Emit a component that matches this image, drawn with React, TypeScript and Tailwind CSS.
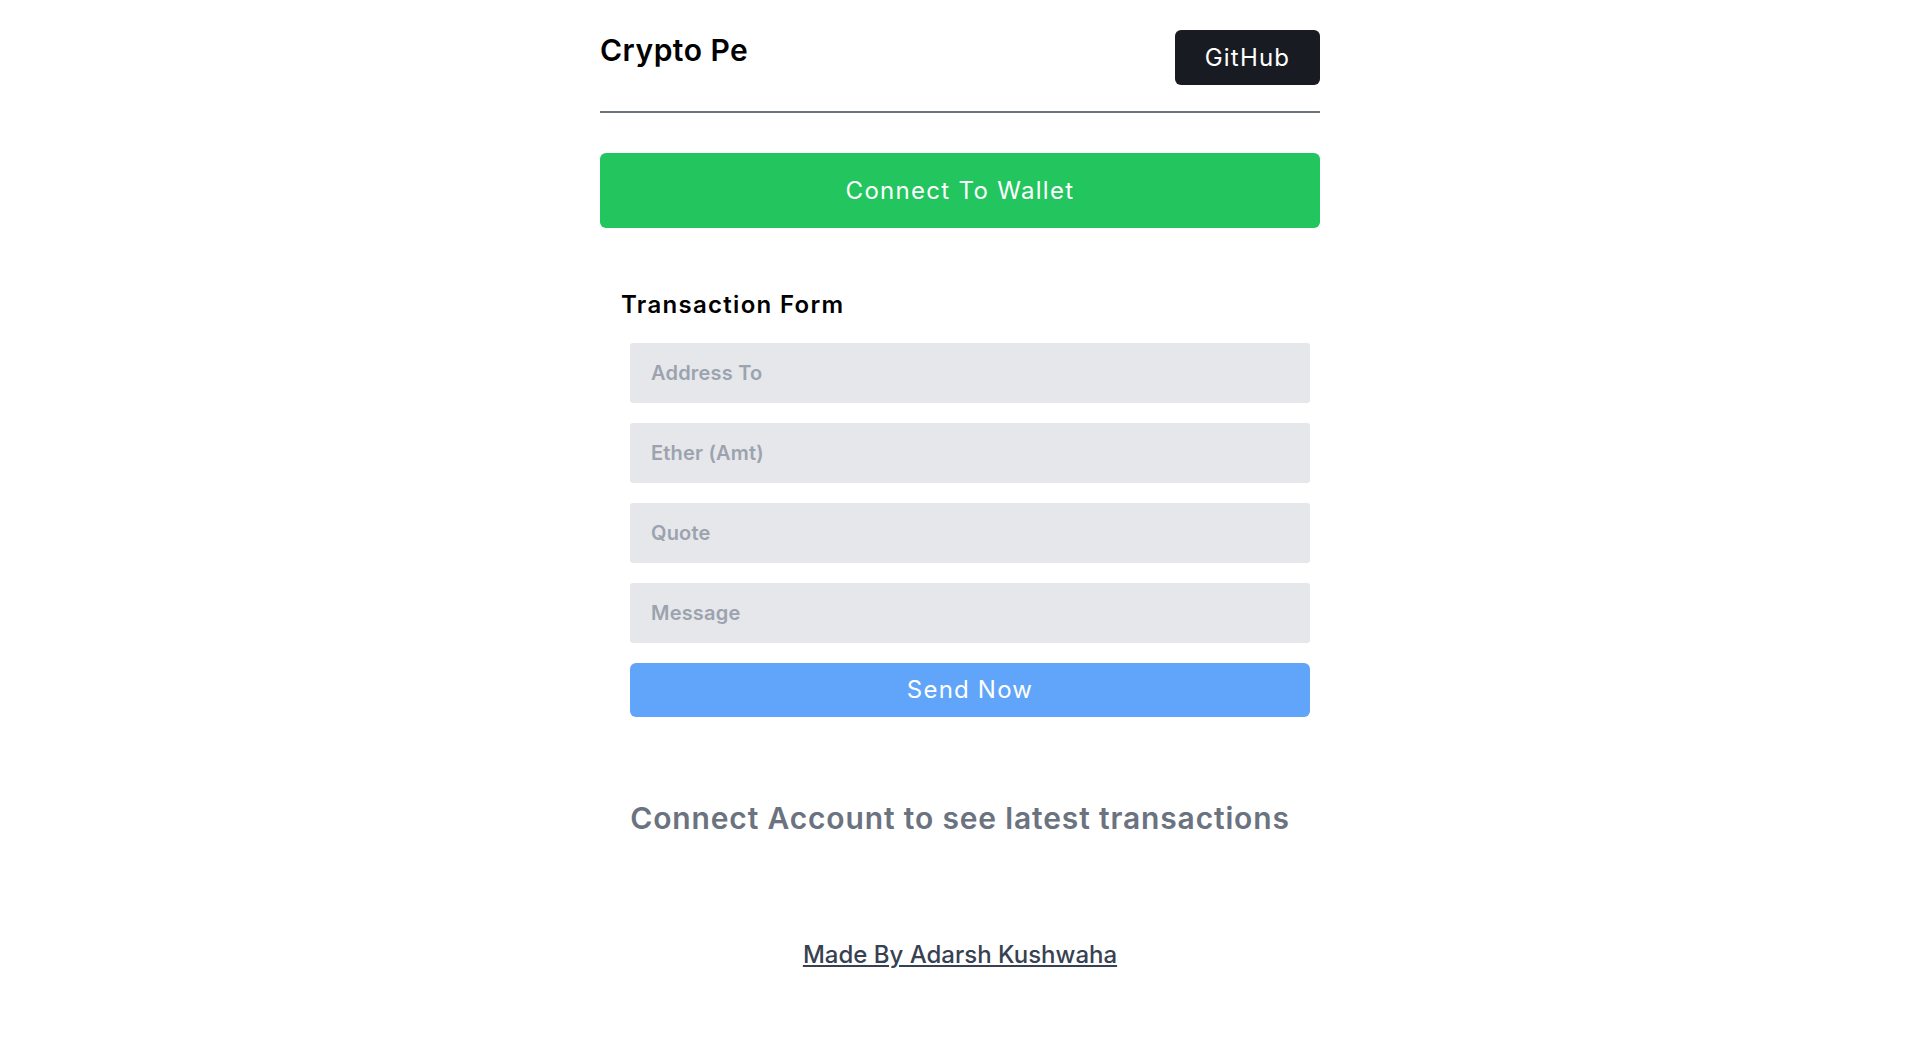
import React from "react";

const fields = ["Address To", "Ether (Amt)", "Quote", "Message"];

export default function App() {
  return (
    <div className="min-h-screen bg-white font-['Inter',_'Noto_Sans',_sans-serif]">
      <div className="w-[720px] mx-auto">
        <header className="flex items-start justify-between pt-[30px]">
          <h1 className="mt-[2px] text-[30px] leading-9 font-semibold tracking-[0.5px] text-black">
            Crypto Pe
          </h1>
          <a
            href="#"
            className="flex h-[55px] w-[145px] items-center justify-center rounded-md bg-[#181c22] text-[24px] tracking-[1.2px] text-white"
          >
            GitHub
          </a>
        </header>
        <div className="mt-[26px] h-[2px] bg-[#6b7280]" />

        <button className="mt-[40px] flex h-[75px] w-full items-center justify-center rounded-md bg-[#22c55e] text-[24px] tracking-[1.3px] text-white">
          Connect To Wallet
        </button>

        <form className="mt-[61px]" onSubmit={(e) => e.preventDefault()}>
          <h2 className="ml-[21px] text-[24px] leading-8 font-semibold tracking-[1.3px] text-black">
            Transaction Form
          </h2>
          <div className="ml-[30px] mr-[10px] mt-[22px] flex flex-col gap-5">
            {fields.map((f) => (
              <input
                key={f}
                placeholder={f}
                className="h-[60px] w-full rounded-[3px] bg-[#e5e7eb] px-[21px] text-[20px] font-semibold tracking-[0.2px] text-gray-700 placeholder:text-[#9ca3af] outline-none"
              />
            ))}
            <button
              type="submit"
              className="flex h-[54px] w-full items-center justify-center rounded-md bg-[#60a5fa] text-[24px] tracking-[1.2px] text-white"
            >
              Send Now
            </button>
          </div>
        </form>

        <p className="mt-[83px] text-center text-[30px] leading-9 font-semibold tracking-[0.85px] text-[#6b7280]">
          Connect Account to see latest transactions
        </p>

        <div className="mt-[103px] text-center">
          <a href="#" className="text-[24px] leading-8 font-medium text-[#374151] underline">
            Made By Adarsh Kushwaha
          </a>
        </div>
      </div>
    </div>
  );
}
